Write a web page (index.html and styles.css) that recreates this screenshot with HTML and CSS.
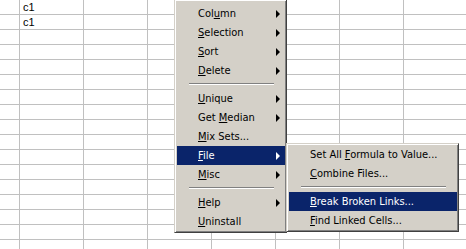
FILE: index.html
```html
<!DOCTYPE html>
<html lang="en">
<head>
  <meta charset="UTF-8" />
  <title>Sheet menu</title>
  <link rel="stylesheet" href="styles.css">
</head>
<body>
  <table class="sheet">
    <colgroup>
      <col class="col-head"><col><col><col><col><col><col><col>
    </colgroup>
    <tr><td></td><td>c1</td><td></td><td></td><td></td><td></td><td></td><td></td></tr>
    <tr><td></td><td>c1</td><td></td><td></td><td></td><td></td><td></td><td></td></tr>
    <tr><td></td><td></td><td></td><td></td><td></td><td></td><td></td><td></td></tr>
    <tr><td></td><td></td><td></td><td></td><td></td><td></td><td></td><td></td></tr>
    <tr><td></td><td></td><td></td><td></td><td></td><td></td><td></td><td></td></tr>
    <tr><td></td><td></td><td></td><td></td><td></td><td></td><td></td><td></td></tr>
    <tr><td></td><td></td><td></td><td></td><td></td><td></td><td></td><td></td></tr>
    <tr><td></td><td></td><td></td><td></td><td></td><td></td><td></td><td></td></tr>
    <tr><td></td><td></td><td></td><td></td><td></td><td></td><td></td><td></td></tr>
    <tr><td></td><td></td><td></td><td></td><td></td><td></td><td></td><td></td></tr>
    <tr><td></td><td></td><td></td><td></td><td></td><td></td><td></td><td></td></tr>
    <tr><td></td><td></td><td></td><td></td><td></td><td></td><td></td><td></td></tr>
    <tr><td></td><td></td><td></td><td></td><td></td><td></td><td></td><td></td></tr>
    <tr><td></td><td></td><td></td><td></td><td></td><td></td><td></td><td></td></tr>
    <tr><td></td><td></td><td></td><td></td><td></td><td></td><td></td><td></td></tr>
    <tr><td></td><td></td><td></td><td></td><td></td><td></td><td></td><td></td></tr>
    <tr><td></td><td></td><td></td><td></td><td></td><td></td><td></td><td></td></tr>
  </table>

  <div class="menu menu-main">
    <div class="item"><span>Col<u>u</u>mn</span><span class="arrow"></span></div>
    <div class="item"><span><u>S</u>election</span><span class="arrow"></span></div>
    <div class="item"><span><u>S</u>ort</span><span class="arrow"></span></div>
    <div class="item"><span><u>D</u>elete</span><span class="arrow"></span></div>
    <div class="sep"></div>
    <div class="item"><span><u>U</u>nique</span><span class="arrow"></span></div>
    <div class="item"><span>Get <u>M</u>edian</span><span class="arrow"></span></div>
    <div class="item"><span><u>M</u>ix Sets...</span></div>
    <div class="item active"><span><u>F</u>ile</span><span class="arrow"></span></div>
    <div class="item"><span><u>M</u>isc</span><span class="arrow"></span></div>
    <div class="sep"></div>
    <div class="item"><span><u>H</u>elp</span><span class="arrow"></span></div>
    <div class="item"><span><u>U</u>ninstall</span></div>
  </div>

  <div class="menu menu-sub">
    <div class="item"><span>Set All <u>F</u>ormula to Value...</span></div>
    <div class="item"><span><u>C</u>ombine Files...</span></div>
    <div class="sep"></div>
    <div class="item active"><span><u>B</u>reak Broken Links...</span></div>
    <div class="item"><span><u>F</u>ind Linked Cells...</span></div>
  </div>
</body>
</html>
```

FILE: styles.css
```css
body {
  margin: 0;
  background: #ffffff;
  overflow: hidden;
  font-family: "Liberation Sans", Arial, sans-serif;
}
.sheet {
  border-collapse: separate;
  border-spacing: 0;
  table-layout: fixed;
  width: 468px;
}
.sheet col {
  width: 64px;
}
.sheet col.col-head {
  width: 20px;
}
.sheet td {
  box-sizing: border-box;
  height: 15px;
  padding: 0 0 0 3px;
  border-right: 1px solid #c0c0c0;
  border-bottom: 1px solid #c0c0c0;
  font-size: 11px;
  line-height: 14px;
  color: #000;
  vertical-align: top;
}
.menu {
  position: absolute;
  box-sizing: border-box;
  background: #d4d0c8;
  padding: 1px;
  border: 1px solid;
  border-color: #d4d0c8 #404040 #404040 #d4d0c8;
  box-shadow: inset 1px 1px 0 #ffffff, inset -1px -1px 0 #808080;
  font-family: "DejaVu Sans Condensed", "DejaVu Sans", sans-serif;
  font-size: 11px;
  color: #000;
}
.menu-main {
  left: 174px;
  top: 0;
  width: 113px;
  border-top: 0;
  padding-top: 4px;
  padding-left: 2px;
}
.menu-sub {
  left: 286px;
  top: 143px;
  width: 173px;
  padding-left: 2px;
}
.item {
  display: flex;
  align-items: center;
  justify-content: space-between;
  height: 19px;
  padding: 0 5px 0 21px;
  white-space: nowrap;
}
.item.active {
  background: #0a246a;
  color: #ffffff;
}
.arrow {
  width: 0;
  height: 0;
  border-left: 4px solid currentColor;
  border-top: 4px solid transparent;
  border-bottom: 4px solid transparent;
}
.sep {
  height: 2px;
  margin: 3px 11px 4px 12px;
  border-top: 1px solid #808080;
  border-bottom: 1px solid #ffffff;
  box-sizing: border-box;
}
```
